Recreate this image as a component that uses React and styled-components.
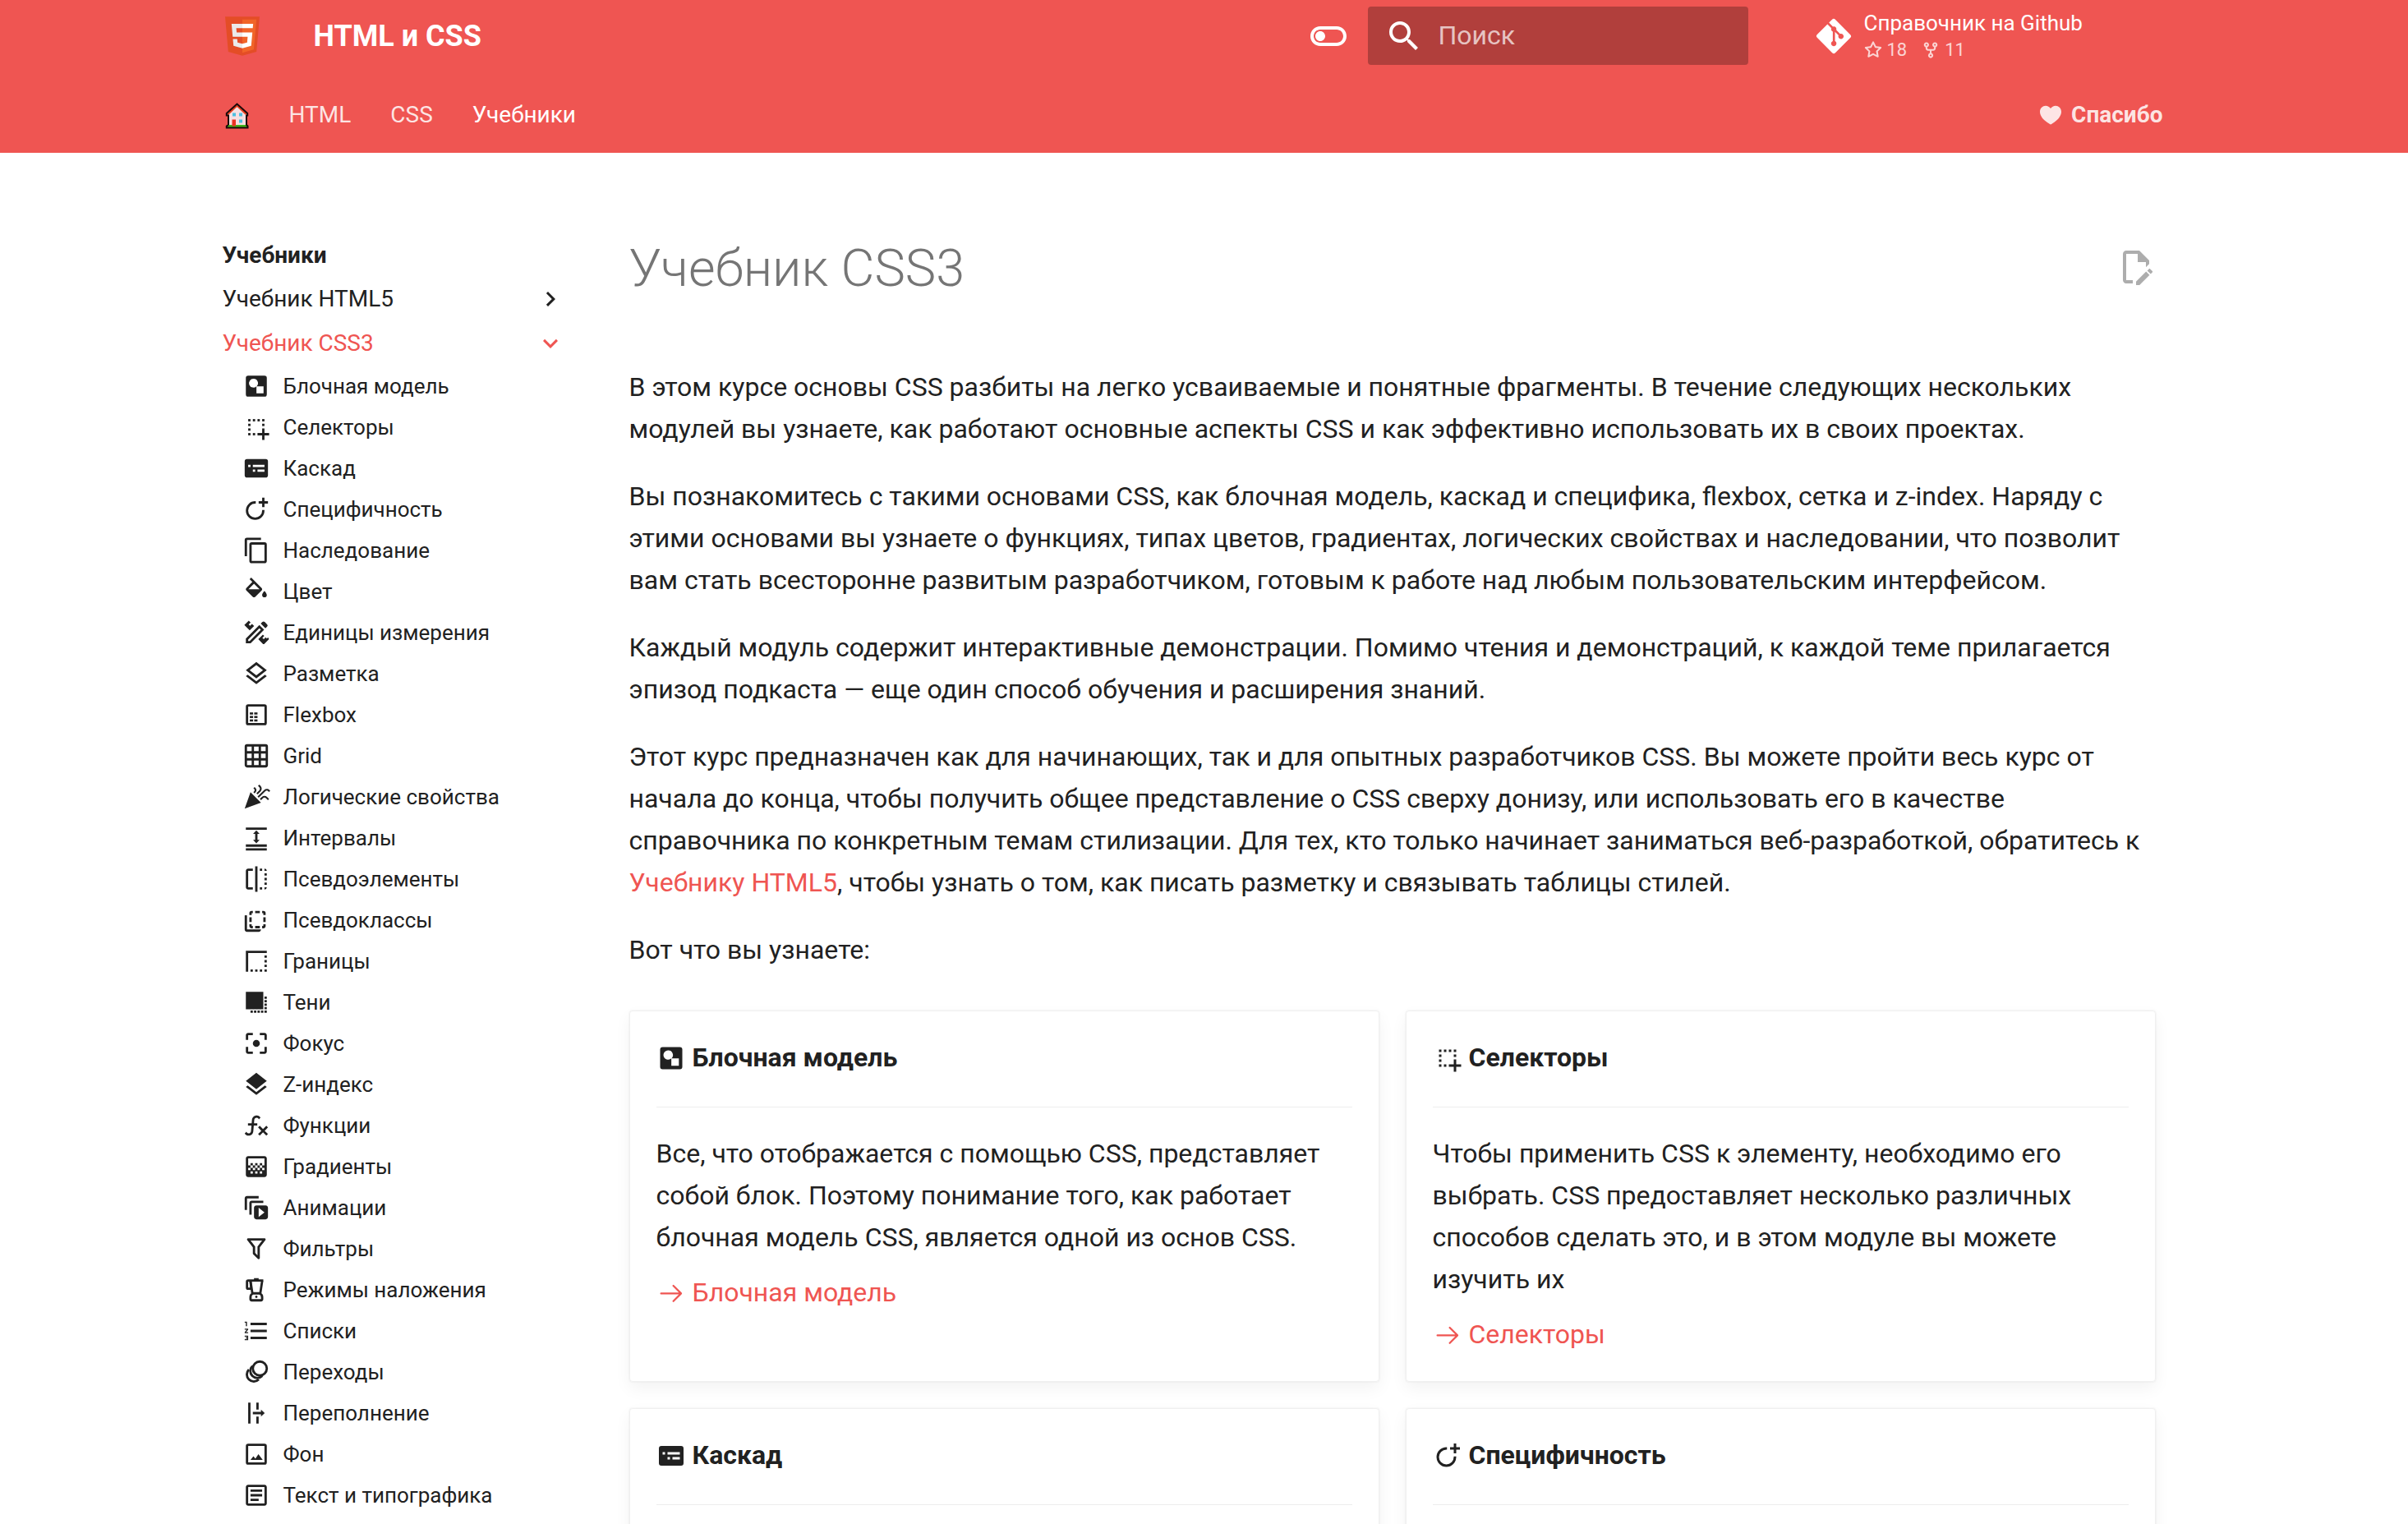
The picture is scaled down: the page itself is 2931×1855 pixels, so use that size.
import React from "react";
import styled, { createGlobalStyle } from "styled-components";
import {
  MdBorderStyle,
  MdFlip,
  MdFormatListNumbered,
  MdGradient,
  MdOutlineToggleOff,
} from "react-icons/md";

const accent = "#ef5552";
const ink = "#212121";

const GlobalStyle = createGlobalStyle`
  * { box-sizing: border-box; }
  body {
    margin: 0;
    background: #fff;
    color: ${ink};
    font-family: Roboto, "Noto Sans", sans-serif;
    font-size: 32px;
    line-height: 51px;
  }
  a { color: inherit; text-decoration: none; }
  ul { list-style: none; margin: 0; padding: 0; }
  h1, h2, p { margin: 0; }
`;

const Page = styled.div`
  height: 100vh;
  overflow: hidden;
`;

const Container = styled.div`
  max-width: 2416px;
  margin: 0 auto;
  padding: 0 24px;
`;

/* ---------- header ---------- */

const Header = styled.header`
  background: ${accent};
  color: #fff;
  padding-right: 22px;
`;

const TopBar = styled.div`
  display: flex;
  align-items: center;
  height: 87px;
`;

const Logo = styled.a`
  display: flex;
  justify-content: center;
  width: 48px;
  margin-right: 63px;
`;

const SiteTitle = styled.span`
  flex: 1;
  font-size: 36px;
  font-weight: 700;
  line-height: 48px;
`;

const IconButton = styled.button`
  display: flex;
  margin: 0 24px 0 0;
  padding: 0;
  border: 0;
  background: none;
  color: inherit;
  font-size: 48px;
`;

const Search = styled.label`
  display: flex;
  align-items: center;
  gap: 18px;
  width: 463px;
  height: 71px;
  padding: 0 20px;
  border-radius: 4px;
  background: rgba(0, 0, 0, 0.26);
`;

const SearchInput = styled.input`
  flex: 1;
  min-width: 0;
  padding: 0;
  border: 0;
  outline: 0;
  background: none;
  color: #fff;
  font: inherit;
  &::placeholder {
    color: rgba(255, 255, 255, 0.7);
    opacity: 1;
  }
`;

const Source = styled.a`
  display: flex;
  align-items: center;
  gap: 13px;
  width: 431px;
  margin-left: 80px;
`;

const SourceText = styled.span`
  display: flex;
  flex-direction: column;
  gap: 3px;
  font-size: 26px;
  line-height: 32px;
`;

const Facts = styled.span`
  display: flex;
  gap: 18px;
  font-size: 22px;
  line-height: 28px;
  opacity: 0.75;
`;

const Fact = styled.span`
  display: flex;
  align-items: center;
  gap: 6px;
`;

const Tabs = styled.nav`
  display: flex;
  align-items: center;
  gap: 48px;
  padding: 35px 0 28px;
  font-size: 28px;
  line-height: 36px;
`;

const Tab = styled.a`
  display: flex;
  align-items: center;
  gap: 12px;
  font-weight: ${(p) => (p.$strong ? 700 : 400)};
  color: ${(p) => (p.$active ? "#fff" : "rgba(255, 255, 255, 0.85)")};
  margin-left: ${(p) => (p.$end ? "auto" : 0)};
  margin-right: ${(p) => (p.$end ? "6px" : 0)};
`;

/* ---------- body ---------- */

const Body = styled.div`
  padding-right: 22px;
`;

const Columns = styled.div`
  display: flex;
  gap: 78px;
`;

const Sidebar = styled.nav`
  flex: 0 0 417px;
  padding-top: 107px;
  font-size: 28px;
  line-height: 36px;
`;

const SidebarTitle = styled.div`
  margin-bottom: 17px;
  font-weight: 700;
`;

const Sections = styled.ul`
  display: flex;
  flex-direction: column;
  gap: 18px;
`;

const SectionLink = styled.a`
  display: flex;
  align-items: center;
  justify-content: space-between;
  color: ${(p) => (p.$active ? accent : "inherit")};
`;

const Lessons = styled.ul`
  display: flex;
  flex-direction: column;
  gap: 16px;
  padding: 17px 0 0 24px;
  font-size: 26px;
  line-height: 34px;
`;

const LessonLink = styled.a`
  display: flex;
  align-items: center;
  gap: 16px;
`;

const Content = styled.main`
  flex: 1;
  min-width: 0;
  padding: 99px 15px 0 0;
`;

const TitleRow = styled.div`
  display: flex;
  align-items: flex-start;
  justify-content: space-between;
  margin-bottom: 78px;
`;

const Title = styled.h1`
  color: #757575;
  font-size: 63px;
  font-weight: 300;
  line-height: 83px;
`;

const EditLink = styled.a`
  display: flex;
  margin-top: 16px;
  color: #adadad;
`;

const Paragraph = styled.p`
  margin-bottom: 31px;
`;

const TextLink = styled.a`
  color: ${accent};
`;

const Cards = styled.div`
  display: grid;
  grid-template-columns: 1fr 1fr;
  gap: 32px;
  margin-top: 48px;
`;

const Card = styled.section`
  padding: 31px 32px;
  border: 1px solid rgba(0, 0, 0, 0.06);
  border-radius: 4px;
  box-shadow: 0 8px 20px rgba(0, 0, 0, 0.05), 0 0 2px rgba(0, 0, 0, 0.1);
`;

const CardTitle = styled.h2`
  display: flex;
  align-items: center;
  gap: 8px;
  padding-bottom: 34px;
  border-bottom: 1px solid rgba(0, 0, 0, 0.07);
  margin-bottom: 31px;
  font-size: 32px;
  font-weight: 700;
  line-height: 51px;
`;

const CardLink = styled.a`
  display: flex;
  align-items: center;
  gap: 8px;
  margin-top: 16px;
  color: ${accent};
`;

/* ---------- icons ---------- */

const Glyph = ({ size, box = "0 0 24 24", children }) => (
  <svg width={size} height={size} viewBox={box} fill="currentColor" aria-hidden="true">
    {children}
  </svg>
);

const dots = (points, w = 2, h = 2) =>
  points.map(([x, y]) => <rect key={`${x}-${y}`} x={x} y={y} width={w} height={h} />);

const stroke = { fill: "none", stroke: "currentColor", strokeWidth: 2 };

const drawings = {
  box: (
    <path
      fillRule="evenodd"
      d="M5 3h14a2 2 0 0 1 2 2v14a2 2 0 0 1-2 2H5a2 2 0 0 1-2-2V5a2 2 0 0 1 2-2zM9.5 5.7a3.75 3.75 0 1 0 2.6 6.4V18.2h6.1v-6.1h-5.9A3.75 3.75 0 0 0 9.5 5.7z"
    />
  ),
  select: (
    <>
      {dots([[5, 5], [9, 5], [13, 5], [17, 5], [5, 9], [17, 9], [5, 13], [5, 17], [9, 17]])}
      <path d="M17 13h2v4h4v2h-4v4h-2v-4h-4v-2h4z" />
    </>
  ),
  cascade: (
    <path
      fillRule="evenodd"
      d="M4 4h16a2 2 0 0 1 2 2v12a2 2 0 0 1-2 2H4a2 2 0 0 1-2-2V6a2 2 0 0 1 2-2zM5 9v2h2V9zM9 9v2h10V9zM9 13v2h2v-2zM13 13v2h6v-2z"
    />
  ),
  specificity: (
    <>
      <path {...stroke} d="M11.5 6H11a7 7 0 1 0 7 7v-.5" />
      <path d="M17 2h2v3h3v2h-3v3h-2V7h-3V5h3z" />
    </>
  ),
  copy: (
    <path d="M19 21H8V7h11m0-2H8a2 2 0 0 0-2 2v14a2 2 0 0 0 2 2h11a2 2 0 0 0 2-2V7a2 2 0 0 0-2-2m-3-4H4a2 2 0 0 0-2 2v14h2V3h12V1z" />
  ),
  fill: (
    <path d="M19,11.5C19,11.5 17,13.67 17,15A2,2 0 0,0 19,17A2,2 0 0,0 21,15C21,13.67 19,11.5 19,11.5M5.21,10L10,5.21L14.79,10M16.56,8.94L7.62,0L6.21,1.41L8.59,3.79L3.44,8.94C2.85,9.5 2.85,10.47 3.44,11.06L8.94,16.56C9.23,16.85 9.62,17 10,17C10.38,17 10.77,16.85 11.06,16.56L16.56,11.06C17.15,10.47 17.15,9.5 16.56,8.94Z" />
  ),
  units: (
    <>
      <path fillRule="evenodd" d="M3 21.2v-4.1L14.6 5.5l4.1 4.1L7.1 21.2zM5 19.3h1.3L15.9 9.6 14.6 8.3 5 18z" />
      <path d="M15.8 4.3l1.4-1.4a1.4 1.4 0 0 1 2 0l2 2a1.4 1.4 0 0 1 0 2l-1.4 1.4z" />
      <path d="M1.7 5.5l3.8-3.8 1.6 1.6-1.7 1.7 1.2 1.2 1.7-1.7 1.8 1.8-3.8 3.8z" />
      <path d="M13.7 17.6l3.9-3.9 1.2 1.2-1.6 1.6 1.2 1.2 1.6-1.6 1 1 1-.9.7.7v.9l-4 4h-.9z" />
    </>
  ),
  layers: (
    <path d="M12,18.54L19.37,12.8L21,14.07L12,21.07L3,14.07L4.62,12.81L12,18.54M12,16L3,9L12,2L21,9L12,16M12,4.53L6.26,9L12,13.47L17.74,9L12,4.53Z" />
  ),
  flexbox: (
    <>
      <rect {...stroke} x="4" y="4" width="16" height="16" rx="1" />
      {dots([[6.4, 10], [10.2, 10], [6.4, 13], [10.2, 13], [6.4, 16], [10.2, 16]], 2.8, 1.8)}
    </>
  ),
  grid: (
    <path d="M10,4V8H14V4H10M16,4V8H20V4H16M16,10V14H20V10H16M16,16V20H20V16H16M14,20V16H10V20H14M8,20V16H4V20H8M8,14V10H4V14H8M8,8V4H4V8H8M10,14H14V10H10V14M4,2H20A2,2 0 0,1 22,4V20A2,2 0 0,1 20,22H4C2.92,22 2,21.1 2,20V4A2,2 0 0,1 4,2Z" />
  ),
  popper: (
    <path d="M14.53 1.45L13.45 2.53L14.53 3.62C14.88 3.97 15.05 4.42 15.05 4.97S14.88 6 14.53 6.38L12.05 8.86L13.08 9.94L15.61 7.41C16.29 6.66 16.63 5.84 16.63 4.97C16.63 4.06 16.29 3.23 15.61 2.48L14.53 1.45M10.55 3.47L9.47 4.55L10.08 5.11C10.39 5.42 10.55 5.8 10.55 6.24S10.39 7.04 10.08 7.32L9.47 7.88L10.55 8.96L11.11 8.35C11.79 7.6 12.13 6.91 12.13 6.19C12.13 5.5 11.79 4.81 11.11 4.03L10.55 3.47M21 5.06C20.13 5.06 19.32 5.41 18.61 6.09L13.03 11.67L14.06 12.75L19.64 7.17C20 6.8 20.5 6.61 20.97 6.61S21.91 6.8 22.31 7.17L22.92 7.78L23.95 6.7L23.39 6.09C22.67 5.41 21.91 5.06 21 5.06M7 8L2 22L16 17L7 8M19 11.06C18.13 11.06 17.32 11.41 16.61 12.09L15 13.67L16.03 14.75L17.64 13.17C18 12.8 18.5 12.61 19 12.61C19.5 12.61 20 12.8 20.34 13.17L21.94 14.75L22.97 13.72L21.39 12.09C20.68 11.41 19.88 11.06 19 11.06Z" />
  ),
  spacing: (
    <path d="M3 3h18v2H3zM3 17.5h18v2H3zM3 20.8h18v2H3zM12 5.4l2.8 3H13v5.2h1.8l-2.8 3-2.8-3H11V8.4H9.2z" />
  ),
  pseudoClass: (
    <>
      <path d="M2 8v12a2 2 0 0 0 2 2h10a2 2 0 0 0 2-2H4V8a2 2 0 0 0-2 0z" />
      <path
        {...stroke}
        d="M7 7.5V6a1 1 0 0 1 1-1h1M11 5h4M17 5h1a1 1 0 0 1 1 1v1.5M19 9.5v4M19 15.5V17a1 1 0 0 1-1 1h-1M15 18h-4M9 18H8a1 1 0 0 1-1-1v-1.5M7 13.5v-4"
      />
    </>
  ),
  shadow: (
    <path d="M3,3H18V18H3V3M19,19H21V21H19V19M19,16H21V18H19V16M19,13H21V15H19V13M19,10H21V12H19V10M19,7H21V9H19V7M16,19H18V21H16V19M13,19H15V21H13V19M10,19H12V21H10V19M7,19H9V21H7V19Z" />
  ),
  focus: (
    <>
      <path d="M5 15H3v4c0 1.1.9 2 2 2h4v-2H5zM5 5h4V3H5c-1.1 0-2 .9-2 2v4h2zM19 3h-4v2h4v4h2V5c0-1.1-.9-2-2-2zM19 19h-4v2h4c1.1 0 2-.9 2-2v-4h-2z" />
      <circle cx="12" cy="12" r="3" />
    </>
  ),
  zIndex: (
    <path d="M12,16L19.36,10.27L21,9L12,2L3,9L4.63,10.27M12,18.54L4.62,12.81L3,14.07L12,21.07L21,14.07L19.37,12.8L12,18.54Z" />
  ),
  functions: (
    <path d="M12.42,5.29C11.32,5.19 10.35,6 10.25,7.11L10,10H12.82V12H9.82L9.38,17.07C9.18,19.27 7.24,20.9 5.04,20.7C3.79,20.59 2.66,19.9 2,18.83L3.5,17.33C3.83,18.38 4.96,18.97 6,18.63C6.78,18.39 7.33,17.7 7.4,16.89L7.82,12H4.82V10H8L8.27,6.93C8.46,4.73 10.39,3.1 12.6,3.28C13.86,3.39 15,4.09 15.66,5.17L14.16,6.67C13.91,5.9 13.23,5.36 12.42,5.29M22,13.65L20.59,12.24L17.76,15.07L14.93,12.24L13.5,13.65L16.35,16.5L13.5,19.31L14.93,20.72L17.76,17.89L20.59,20.72L22,19.31L19.17,16.5L22,13.65Z" />
  ),
  animation: (
    <path d="M4,2C2.89,2 2,2.89 2,4V14H4V4H14V2H4M8,6C6.89,6 6,6.89 6,8V18H8V8H18V6H8M12,10C10.89,10 10,10.89 10,12V20C10,21.1 10.9,22 12,22H20C21.1,22 22,21.1 22,20V12C22,10.9 21.1,10 20,10H12M14,12L19,16L14,20V12Z" />
  ),
  filter: (
    <path d="M15,19.88C15.04,20.18 14.94,20.5 14.71,20.71C14.32,21.1 13.69,21.1 13.3,20.71L9.29,16.7C9.06,16.47 8.96,16.16 9,15.87V10.75L4.21,4.62C3.87,4.19 3.95,3.56 4.38,3.22C4.57,3.08 4.78,3 5,3V3H19V3C19.22,3 19.43,3.08 19.62,3.22C20.05,3.56 20.13,4.19 19.79,4.62L15,10.75V19.88M7.04,5L11,10.06V15.58L13,17.58V10.05L16.96,5H7.04Z" />
  ),
  blender: (
    <>
      <path fillRule="evenodd" d="M10 2h4v1h4v2H8l.3 7H5a2 2 0 0 1-2-2V5a2 2 0 0 1 2-2h5zM5 5v5h1.6L6 5z" />
      <path
        {...stroke}
        d="M7 4.500L8.600 15M17 4.500L15.400 15M9.500 15h5a3.500 3.500 0 0 1 2.500 3.500V20a1 1 0 0 1-1 1H8a1 1 0 0 1-1-1v-1.500A3.500 3.500 0 0 1 9.500 15z"
      />
      <circle cx="12" cy="18" r="1" />
    </>
  ),
  transition: (
    <g {...stroke}>
      <circle cx="15" cy="9" r="6" />
      <path d="M8.6 6.9A6 6 0 1 0 17.1 15.4" />
      <path d="M5.6 9.9A6 6 0 1 0 14.1 18.4" />
    </g>
  ),
  overflow: <path d="M5 3h2v18H5zM12 3h2v6h-2zM12 15h2v6h-2zM9 11h7V9l3.200 3-3.200 3v-2H9z" />,
  image: (
    <>
      <rect {...stroke} x="4" y="4" width="16" height="16" rx="1" />
      <path d="M7 17l2.500-3.200 1.700 2 2.600-3.800 3.700 5z" />
    </>
  ),
  text: (
    <path d="M5,3C3.89,3 3,3.89 3,5V19C3,20.11 3.89,21 5,21H19C20.11,21 21,20.11 21,19V5C21,3.89 20.11,3 19,3H5M5,5H19V19H5V5M7,7V9H17V7H7M7,11V13H17V11H7M7,15V17H14V15H7Z" />
  ),
  chevronRight: <path d="M8.59,16.58L13.17,12L8.59,7.41L10,6L16,12L10,18L8.59,16.58Z" />,
  chevronDown: <path d="M7.41,8.58L12,13.17L16.59,8.58L18,10L12,16L6,10L7.41,8.58Z" />,
  magnify: (
    <path d="M9.5,3A6.5,6.5 0 0,1 16,9.5C16,11.11 15.41,12.59 14.44,13.73L14.71,14H15.5L20.5,19L19,20.5L14,15.5V14.71L13.73,14.44C12.59,15.41 11.11,16 9.5,16A6.5,6.5 0 0,1 3,9.5A6.5,6.5 0 0,1 9.5,3M9.5,5C7,5 5,7 5,9.5C5,12 7,14 9.5,14C12,14 14,12 14,9.5C14,7 12,5 9.5,5Z" />
  ),
  edit: (
    <path d="M10 20H6V4H13V9H18V12.1L20 10.1V8L14 2H6C4.9 2 4 2.9 4 4V20C4 21.1 4.9 22 6 22H10V20M20.2 13C20.3 13 20.5 13.1 20.6 13.2L21.9 14.5C22.1 14.7 22.1 15.1 21.9 15.3L20.9 16.3L18.8 14.2L19.8 13.2C19.9 13.1 20 13 20.2 13M20.2 16.9L14.1 23H12V20.9L18.1 14.8L20.2 16.9Z" />
  ),
  arrow: (
    <path d="M13.22 19.03a.75.75 0 0 1 0-1.06L18.19 13H3.75a.75.75 0 0 1 0-1.5h14.44l-4.97-4.97a.749.749 0 0 1 .326-1.275.749.749 0 0 1 .734.215l6.25 6.25a.75.75 0 0 1 0 1.06l-6.25 6.25a.75.75 0 0 1-1.06 0Z" />
  ),
};

const packaged = {
  pseudoElement: MdFlip,
  border: MdBorderStyle,
  gradient: MdGradient,
  list: MdFormatListNumbered,
};

const Icon = ({ name, size }) => {
  const Packaged = packaged[name];
  return Packaged ? <Packaged size={size} aria-hidden="true" /> : <Glyph size={size}>{drawings[name]}</Glyph>;
};

const Html5Logo = () => (
  <svg width="42" height="48" viewBox="9 1.6 110 124.8" aria-hidden="true">
    <path fill="#E44D26" d="M19.037 113.876L9.032 1.661h109.936l-10.016 112.198-45.019 12.48z" />
    <path fill="#F16529" d="M64 116.8l36.378-10.086 8.559-95.878H64z" />
    <path
      fill="#EBEBEB"
      d="M64 52.455H45.788L44.53 38.361H64V24.599H29.489l.33 3.692 3.382 37.927H64zm0 35.743l-.061.017-15.327-4.14-.979-10.975H33.816l1.928 21.609 28.193 7.826.063-.017z"
    />
    <path
      fill="#fff"
      d="M63.952 52.455v13.763h16.947l-1.597 17.849-15.35 4.143v14.319l28.215-7.82.207-2.325 3.234-36.233.335-3.696h-3.708zm0-27.856v13.762h33.244l.276-3.092.628-6.978.329-3.692z"
    />
  </svg>
);

const House = () => (
  <svg width="33" height="33" viewBox="0 0 33 33" aria-hidden="true">
    <path fill="#f6dfe1" d="M7 14.5L17.5 5 29 14.5V30H7z" />
    <path fill="#3fb41b" d="M6 28h24v3H6z" />
    <path fill="none" stroke="#e8401f" strokeWidth="2" d="M6.5 15L17.5 4.8 28.5 15" />
    <path
      fill="none"
      stroke="#1b0a0a"
      strokeWidth="2"
      d="M7 28v-11.5H4.8V14L17.5 2.5 30.2 14v2.5H29V28l1.500 1.500V31.500H4.800V29.500L7 28"
    />
    <path fill="#4fbfe0" d="M12 13.5h4v4h-4zM20 13.5h4v4h-4zM20 21.5h4v4h-4z" />
    <path fill="#ea3323" d="M11.5 21.5h4.500v8h-4.500z" />
  </svg>
);

const GitLogo = () => (
  <svg width="48" height="48" viewBox="-32 0 512 512" fill="currentColor" aria-hidden="true">
    <path d="M439.55 236.05L244 40.45a28.87 28.87 0 0 0-40.81 0l-40.66 40.63 51.52 51.52c27.06-9.14 52.68 16.77 43.39 43.68l49.66 49.66c34.23-11.8 61.18 31 35.47 56.69-26.49 26.49-70.21-2.87-56-37.34L240.22 199v121.85c25.3 12.54 22.26 41.85 9.08 55a34.34 34.34 0 0 1-48.55 0c-17.57-17.6-11.07-46.91 11.25-56v-123c-20.8-8.51-24.6-30.74-18.64-45L142.57 101 8.45 235.14a28.86 28.86 0 0 0 0 40.81l195.61 195.6a28.86 28.86 0 0 0 40.8 0l194.69-194.69a28.86 28.86 0 0 0 0-40.81z" />
  </svg>
);

/* ---------- data ---------- */

const lessons = [
  ["box", "Блочная модель"],
  ["select", "Селекторы"],
  ["cascade", "Каскад"],
  ["specificity", "Специфичность"],
  ["copy", "Наследование"],
  ["fill", "Цвет"],
  ["units", "Единицы измерения"],
  ["layers", "Разметка"],
  ["flexbox", "Flexbox"],
  ["grid", "Grid"],
  ["popper", "Логические свойства"],
  ["spacing", "Интервалы"],
  ["pseudoElement", "Псевдоэлементы"],
  ["pseudoClass", "Псевдоклассы"],
  ["border", "Границы"],
  ["shadow", "Тени"],
  ["focus", "Фокус"],
  ["zIndex", "Z-индекс"],
  ["functions", "Функции"],
  ["gradient", "Градиенты"],
  ["animation", "Анимации"],
  ["filter", "Фильтры"],
  ["blender", "Режимы наложения"],
  ["list", "Списки"],
  ["transition", "Переходы"],
  ["overflow", "Переполнение"],
  ["image", "Фон"],
  ["text", "Текст и типографика"],
];

const cards = [
  {
    icon: "box",
    title: "Блочная модель",
    text: "Все, что отображается с помощью CSS, представляет собой блок. Поэтому понимание того, как работает блочная модель CSS, является одной из основ CSS.",
  },
  {
    icon: "select",
    title: "Селекторы",
    text: "Чтобы применить CSS к элементу, необходимо его выбрать. CSS предоставляет несколько различных способов сделать это, и в этом модуле вы можете изучить их",
  },
  { icon: "cascade", title: "Каскад" },
  { icon: "specificity", title: "Специфичность" },
];

export default function App() {
  return (
    <Page>
      <GlobalStyle />
      <Header>
        <Container>
          <TopBar>
            <Logo href="#" aria-label="HTML и CSS">
              <Html5Logo />
            </Logo>
            <SiteTitle>HTML и CSS</SiteTitle>
            <IconButton type="button" aria-label="Тема">
              <MdOutlineToggleOff />
            </IconButton>
            <Search>
              <Icon name="magnify" size={48} />
              <SearchInput type="text" placeholder="Поиск" aria-label="Поиск" />
            </Search>
            <Source href="#">
              <GitLogo />
              <SourceText>
                <span>Справочник на Github</span>
                <Facts>
                  <Fact>
                    <Glyph size={22} box="0 0 16 16">
                      <path d="M8 .25a.75.75 0 0 1 .673.418l1.882 3.815 4.21.612a.75.75 0 0 1 .416 1.279l-3.046 2.97.719 4.192a.751.751 0 0 1-1.088.791L8 12.347l-3.766 1.98a.75.75 0 0 1-1.088-.79l.72-4.194L.818 6.374a.75.75 0 0 1 .416-1.28l4.21-.611L7.327.668A.75.75 0 0 1 8 .25Zm0 2.445L6.615 5.5a.75.75 0 0 1-.564.41l-3.097.45 2.24 2.184a.75.75 0 0 1 .216.664l-.528 3.084 2.769-1.456a.75.75 0 0 1 .698 0l2.77 1.456-.53-3.084a.75.75 0 0 1 .216-.664l2.24-2.183-3.096-.45a.75.75 0 0 1-.564-.41L8 2.694Z" />
                    </Glyph>
                    18
                  </Fact>
                  <Fact>
                    <Glyph size={22} box="0 0 16 16">
                      <path d="M5 5.372v.878c0 .414.336.75.75.75h4.5a.75.75 0 0 0 .75-.75v-.878a2.25 2.25 0 1 1 1.5 0v.878a2.25 2.25 0 0 1-2.25 2.25h-1.5v2.128a2.251 2.251 0 1 1-1.5 0V8.5h-1.5A2.25 2.25 0 0 1 3.5 6.25v-.878a2.25 2.25 0 1 1 1.5 0ZM5 3.25a.75.75 0 1 0-1.5 0 .75.75 0 0 0 1.5 0Zm6.75.75a.75.75 0 1 0 0-1.5.75.75 0 0 0 0 1.5Zm-3 8.75a.75.75 0 1 0-1.5 0 .75.75 0 0 0 1.5 0Z" />
                    </Glyph>
                    11
                  </Fact>
                </Facts>
              </SourceText>
            </Source>
          </TopBar>
          <Tabs aria-label="Разделы">
            <Tab href="#" aria-label="Главная">
              <House />
            </Tab>
            <Tab href="#">HTML</Tab>
            <Tab href="#">CSS</Tab>
            <Tab href="#" $active>
              Учебники
            </Tab>
            <Tab href="#" $strong $end>
              <Glyph size={26} box="0 0 16 16">
                <path d="M7.655 14.916v-.001h-.002l-.006-.003-.018-.01a22.066 22.066 0 0 1-3.744-2.584C2.045 10.731 0 8.35 0 5.5 0 2.836 2.086 1 4.25 1 5.797 1 7.153 1.802 8 3.02 8.847 1.802 10.203 1 11.75 1 13.914 1 16 2.836 16 5.5c0 2.85-2.044 5.231-3.886 6.818a22.094 22.094 0 0 1-3.433 2.414 7.152 7.152 0 0 1-.31.17l-.018.01-.008.004a.75.75 0 0 1-.69 0Z" />
              </Glyph>
              Спасибо
            </Tab>
          </Tabs>
        </Container>
      </Header>

      <Body>
        <Container>
          <Columns>
            <Sidebar aria-label="Учебники">
              <SidebarTitle>Учебники</SidebarTitle>
              <Sections>
                <li>
                  <SectionLink href="#">
                    Учебник HTML5
                    <Icon name="chevronRight" size={36} />
                  </SectionLink>
                </li>
                <li>
                  <SectionLink href="#" $active>
                    Учебник CSS3
                    <Icon name="chevronDown" size={36} />
                  </SectionLink>
                  <Lessons>
                    {lessons.map(([icon, label]) => (
                      <li key={label}>
                        <LessonLink href="#">
                          <Icon name={icon} size={34} />
                          {label}
                        </LessonLink>
                      </li>
                    ))}
                  </Lessons>
                </li>
              </Sections>
            </Sidebar>

            <Content>
              <TitleRow>
                <Title>Учебник CSS3</Title>
                <EditLink href="#" aria-label="Редактировать">
                  <Icon name="edit" size={48} />
                </EditLink>
              </TitleRow>
              <Paragraph>
                В этом курсе основы CSS разбиты на легко усваиваемые и понятные фрагменты. В течение
                следующих нескольких модулей вы узнаете, как работают основные аспекты CSS и как
                эффективно использовать их в своих проектах.
              </Paragraph>
              <Paragraph>
                Вы познакомитесь с такими основами CSS, как блочная модель, каскад и специфика,
                flexbox, сетка и z-index. Наряду с этими основами вы узнаете о функциях, типах цветов,
                градиентах, логических свойствах и наследовании, что позволит вам стать всесторонне
                развитым разработчиком, готовым к работе над любым пользовательским интерфейсом.
              </Paragraph>
              <Paragraph>
                Каждый модуль содержит интерактивные демонстрации. Помимо чтения и демонстраций, к
                каждой теме прилагается эпизод подкаста — еще один способ обучения и расширения
                знаний.
              </Paragraph>
              <Paragraph>
                Этот курс предназначен как для начинающих, так и для опытных разработчиков CSS. Вы
                можете пройти весь курс от начала до конца, чтобы получить общее представление о CSS
                сверху донизу, или использовать его в качестве справочника по конкретным темам
                стилизации. Для тех, кто только начинает заниматься веб-разработкой, обратитесь к{" "}
                <TextLink href="#">Учебнику HTML5</TextLink>, чтобы узнать о том, как писать разметку
                и связывать таблицы стилей.
              </Paragraph>
              <Paragraph>Вот что вы узнаете:</Paragraph>
              <Cards>
                {cards.map((card) => (
                  <Card key={card.title}>
                    <CardTitle>
                      <Icon name={card.icon} size={36} />
                      {card.title}
                    </CardTitle>
                    {card.text && (
                      <>
                        <p>{card.text}</p>
                        <CardLink href="#">
                          <Icon name="arrow" size={36} />
                          {card.title}
                        </CardLink>
                      </>
                    )}
                  </Card>
                ))}
              </Cards>
            </Content>
          </Columns>
        </Container>
      </Body>
    </Page>
  );
}
